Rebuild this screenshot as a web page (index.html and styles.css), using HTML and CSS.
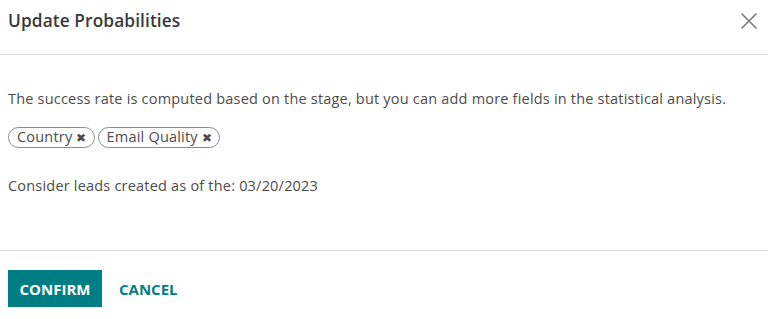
FILE: index.html
```html
<!DOCTYPE html>
<html>
<head>
<meta charset="utf-8">
<link rel="stylesheet" href="styles.css">
</head>
<body>
<div class="modal">
  <header class="modal-header">
    <h4 class="modal-title">Update Probabilities</h4>
    <button class="close" aria-label="Close">
      <svg width="18" height="18" viewBox="0 0 18 18"><path d="M1.5 1.5L16.5 16.5M16.5 1.5L1.5 16.5" stroke="#7a7a7a" stroke-width="1.6" fill="none"/></svg>
    </button>
  </header>
  <main class="modal-body">
    <p class="intro">The success rate is computed based on the stage, but you can add more fields in the statistical analysis.</p>
    <div class="tags">
      <span class="tag">Country <span class="x">✖</span></span>
      <span class="tag">Email Quality <span class="x">✖</span></span>
    </div>
    <p class="since">Consider leads created as of the: 03/20/2023</p>
  </main>
  <footer class="modal-footer">
    <button class="btn btn-primary">CONFIRM</button>
    <button class="btn btn-link">CANCEL</button>
  </footer>
</div>
</body>
</html>
```

FILE: styles.css
```css
* { box-sizing: border-box; }
html, body { margin: 0; padding: 0; background: #fff; }
body { font-family: "Open Sans", "Noto Sans", sans-serif; color: #4c4c4c; font-size: 14.5px; letter-spacing: 0.2px; }
.modal { width: 768px; }
.modal-header {
  display: flex; align-items: flex-start; justify-content: space-between;
  height: 55px; padding: 9px 10px 0 8px;
  border-bottom: 1px solid #dcdcdc;
}
.modal-title { margin: 0; font-size: 17.3px; font-weight: 600; color: #3a3a3a; line-height: 24px; letter-spacing: 0.1px; }
.close { background: none; border: 0; padding: 0; display: flex; margin-top: 3px; }
.modal-body { padding: 34px 8px 0; height: 196px; border-bottom: 1px solid #dcdcdc; }
.intro { margin: 0; line-height: 20px; }
.tags { display: flex; gap: 3px; margin-top: 18px; }
.tag {
  display: inline-flex; align-items: center; gap: 4px;
  height: 21px; padding: 0 7px 0 8px;
  border: 1px solid #8a8a8a; border-radius: 11px;
  color: #4c4c4c; line-height: 1;
}
.tag .x { font-size: 11.5px; color: #4a4a4a; }
.since { margin: 28px 0 0; line-height: 20px; }
.modal-footer { display: flex; align-items: center; gap: 8px; padding: 19px 8px; }
.btn { font-family: inherit; font-size: 15px; font-weight: 700; border: 0; cursor: pointer; letter-spacing: 0; }
.btn-primary { background: #017e84; color: #fff; height: 37px; width: 94px; padding: 0; }
.btn-link { background: none; color: #017e84; padding: 0 9px; }
```
